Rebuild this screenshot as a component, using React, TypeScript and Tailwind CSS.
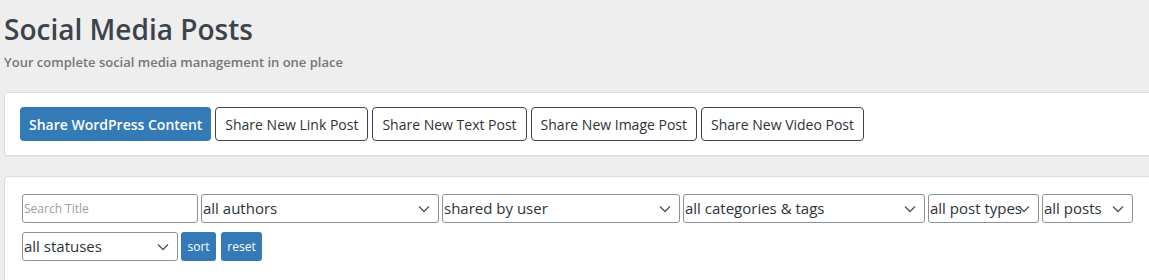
import React from "react";

const shareButtons = [
	"Share New Link Post",
	"Share New Text Post",
	"Share New Image Post",
	"Share New Video Post",
];

const Chevron = () => (
	<svg
		className="pointer-events-none absolute right-[9px] top-1/2 -translate-y-1/2"
		width="12"
		height="8"
		viewBox="0 0 12 8"
		fill="none"
	>
		<path d="M1 1.5l5 5 5-5" stroke="#50575e" strokeWidth="1.4" />
	</svg>
);

const Select = ({ label, width }: { label: string; width: string }) => (
	<div className={`relative ${width}`}>
		<select
			defaultValue={label}
			className="h-[29px] w-full appearance-none rounded-[3px] border border-[#8c8f94] bg-white pl-[1px] pr-[2px] text-[15px] text-[#2c3338] outline-none"
		>
			<option>{label}</option>
		</select>
		<Chevron />
	</div>
);

const App: React.FC = () => {
	return (
		<div
			className="h-[280px] w-[1149px] overflow-hidden bg-[#eeeeee] text-[#3c434a]"
			style={{ fontFamily: '"Open Sans", sans-serif' }}
		>
			<div className="pl-[4px] pt-[9px]">
				<h1 className="text-[28px] font-semibold leading-[40px] text-[#3c434a]">Social Media Posts</h1>
				<p className="mt-[4px] text-[13px] font-semibold leading-[18px] text-[#72777c]">
					Your complete social media management in one place
				</p>
			</div>

			{/* share buttons */}
			<div className="ml-[4px] mt-[21px] w-[1170px] rounded-[3px] border border-[#dcdcde] bg-white px-[15px] py-[14px] shadow-[0_1px_1px_rgba(0,0,0,0.04)]">
				<div className="flex gap-[4px]">
					<button className="h-[34px] rounded-[4px] bg-[#337ab7] px-[9px] text-[14px] font-semibold text-white">
						Share WordPress Content
					</button>
					{shareButtons.map((b) => (
						<button
							key={b}
							className="h-[34px] rounded-[4px] border border-[#3c434a] bg-white px-[9px] text-[14px] text-[#2c3338]"
						>
							{b}
						</button>
					))}
				</div>
			</div>

			{/* filters */}
			<div className="ml-[4px] mt-[20px] h-[200px] w-[1170px] rounded-[3px] border border-[#dcdcde] bg-white px-[17px] pt-[17px]">
				<div className="flex gap-[3px]">
					<input
						type="text"
						placeholder="Search Title"
						className="h-[29px] w-[176px] rounded-[3px] border border-[#8c8f94] bg-white px-[1px] text-[12px] text-[#2c3338] outline-none placeholder:text-[#9a9da1]"
					/>
					<Select label="all authors" width="w-[238px]" />
					<Select label="shared by user" width="w-[238px]" />
					<Select label="all categories & tags" width="w-[242px]" />
					<Select label="all post types" width="w-[111px]" />
					<Select label="all posts" width="w-[91px]" />
				</div>
				<div className="mt-[9px] flex gap-[3px]">
					<Select label="all statuses" width="w-[156px]" />
					<button className="h-[29px] w-[35px] rounded-[3px] bg-[#337ab7] text-[12px] text-white">sort</button>
					<button className="ml-[2px] h-[29px] w-[41px] rounded-[3px] bg-[#337ab7] text-[12px] text-white">reset</button>
				</div>
			</div>
		</div>
	);
};

export default App;
